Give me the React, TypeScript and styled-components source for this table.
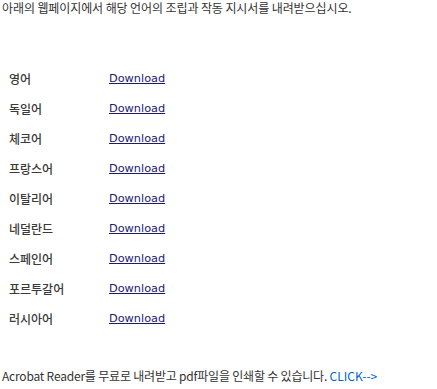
import styled, {createGlobalStyle} from 'styled-components';

const GlobalStyle = createGlobalStyle`
  body {
    margin: 0;
    background: #fff;
    font-family: "Noto Sans CJK KR", "DejaVu Sans", sans-serif;
    color: #333;
  }
`;

const Page = styled.div`
  width: 437px;
  height: 389px;
  display: flex;
  flex-direction: column;
`;

const Intro = styled.p`
  margin: 0;
  padding: 0 0 0 2px;
  font-size: 12px;
  line-height: 15px;
  letter-spacing: -0.1px;
`;

const ManualTable = styled.div`
  margin-top: 48px;
  display: flex;
  flex-direction: column;
`;

const Row = styled.div`
  display: grid;
  grid-template-columns: 100px auto;
  align-items: center;
  height: 30px;
  padding-left: 9px;
`;

const Lang = styled.span`
  font-size: 12px;
  font-weight: 500;
  color: #3a3a3a;
`;

const DownloadLink = styled.a`
  justify-self: start;
  font-family: "DejaVu Sans", Verdana, sans-serif;
  font-size: 11.3px;
  color: #1a1a70;
  text-decoration: underline;
`;

const Footer = styled.p`
  margin: auto 0 6px 0;
  padding-left: 2px;
  font-size: 12px;
  line-height: 15px;
  letter-spacing: -0.2px;
`;

const Click = styled.a`
  color: #0066cc;
  text-decoration: none;
  letter-spacing: 0;
`;

const languages = ['영어', '독일어', '체코어', '프랑스어', '이탈리어', '네덜란드', '스페인어', '포르투갈어', '러시아어'];

export default function App() {
  return (
    <Page>
      <GlobalStyle/>
      <Intro>아래의 웹페이지에서 해당 언어의 조립과 작동 지시서를 내려받으십시오.</Intro>
      <ManualTable>
        {languages.map(name => (
          <Row key={name}>
            <Lang>{name}</Lang>
            <DownloadLink href="#">Download</DownloadLink>
          </Row>
        ))}
      </ManualTable>
      <Footer>
        Acrobat Reader를 무료로 내려받고 pdf파일을 인쇄할 수 있습니다. <Click href="#">CLICK--&gt;</Click>
      </Footer>
    </Page>
  );
}
